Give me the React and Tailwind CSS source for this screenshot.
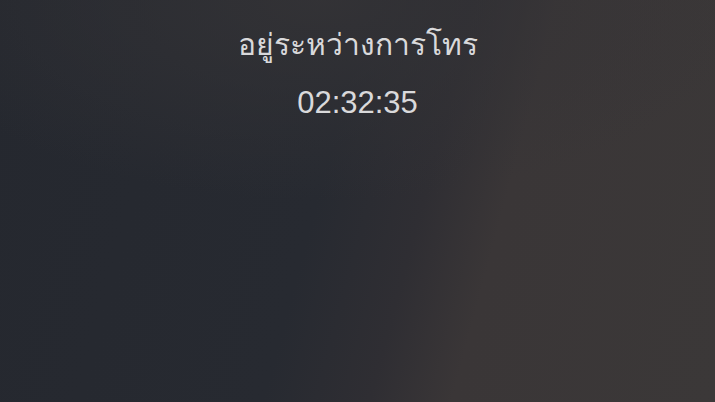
export default function App() {
  return (
    <div className="w-[715px] h-[402px] overflow-hidden bg-[radial-gradient(ellipse_60%_50%_at_45%_0%,rgba(52,51,54,0.9),transparent_100%),linear-gradient(105deg,#25282f_0%,#272a31_45%,#2f2e33_58%,#3a3637_68%,#3b3838_100%)] flex flex-col items-center">
      <div className="mt-[24px] text-[30px] leading-[40px] text-[#d9d9db] font-['Noto_Sans','Liberation_Sans',sans-serif]">
        อยู่ระหว่างการโทร
      </div>
      <div className="mt-[21px] text-[31px] leading-[36px] text-[#d9d9db] font-['Liberation_Sans',Arial,sans-serif]">
        02:32:35
      </div>
    </div>
  );
}
